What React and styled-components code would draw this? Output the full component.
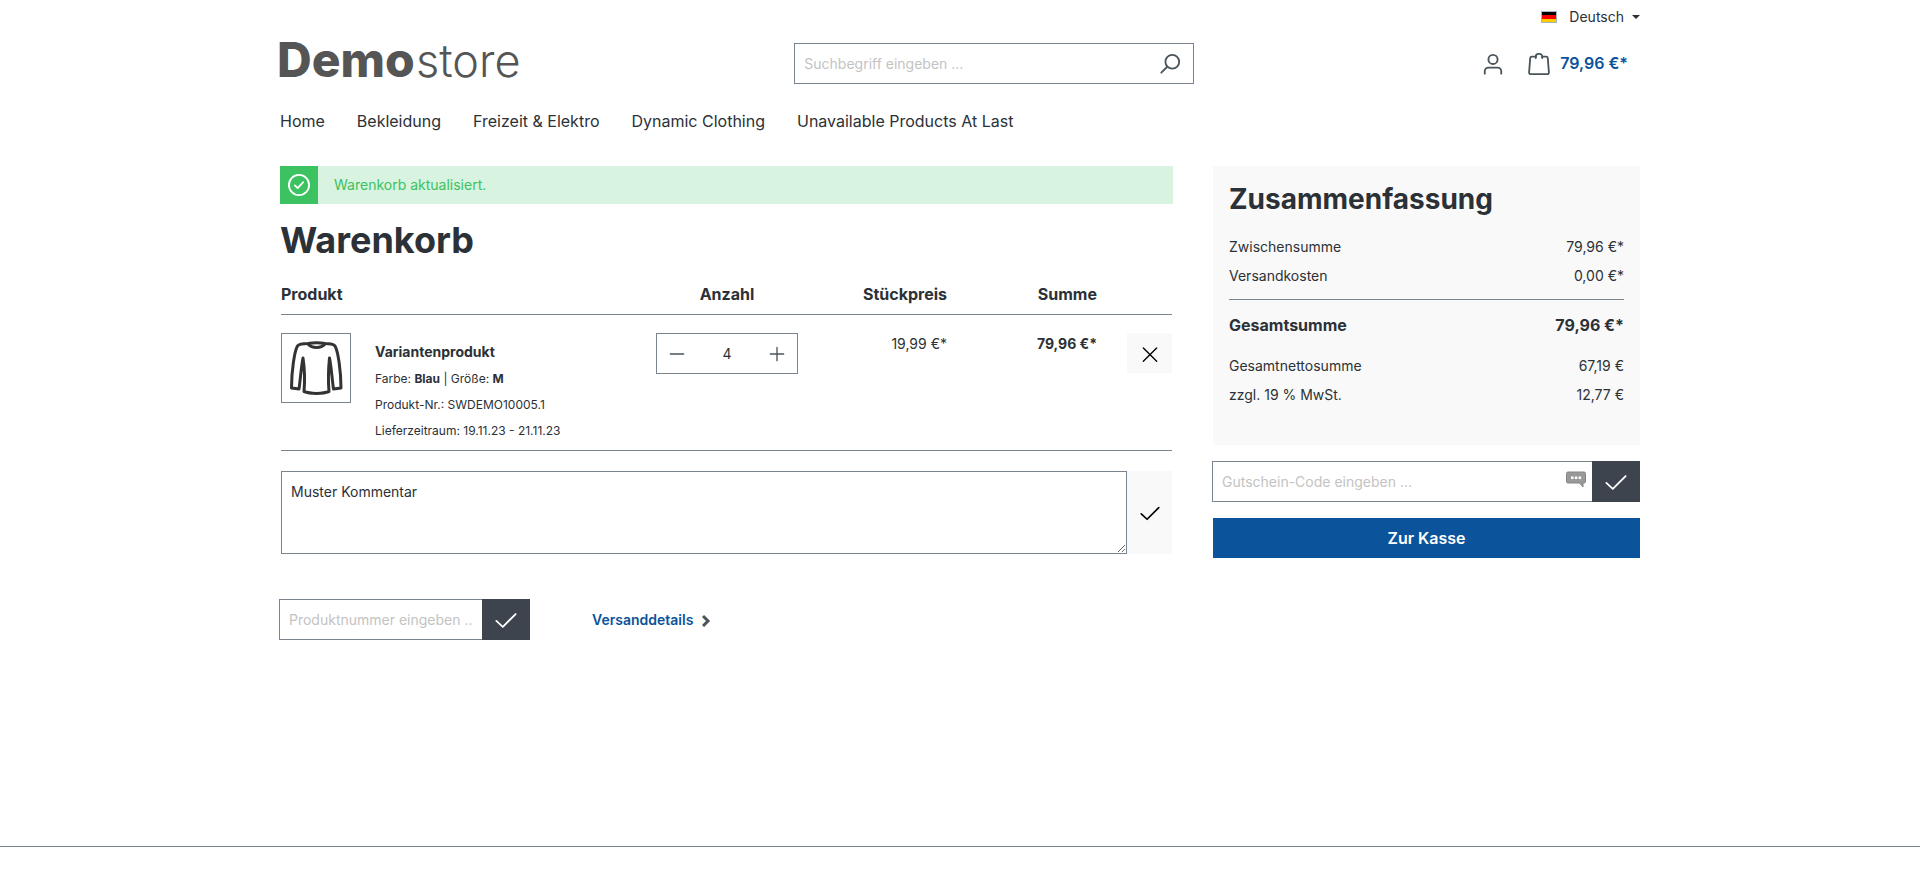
import React, { useState } from "react";
import styled, { createGlobalStyle, css, ThemeProvider } from "styled-components";

const theme = {
  color: {
    text: "#2b3136",
    border: "#798490",
    primary: "#0b539b",
    dark: "#3d444d",
    icon: "#4a545b",
    success: "#3cc261",
    successLight: "#d8f3df",
    light: "#f9f9f9",
    placeholder: "#c3c3c3",
    logo: "#555555",
  },
};

const GlobalStyle = createGlobalStyle`
  * {
    box-sizing: border-box;
  }
  body {
    margin: 0;
    background: #fff;
    color: #2b3136;
    font-family: Inter, sans-serif;
    font-size: 14px;
    line-height: 21px;
  }
  button, input, textarea, select {
    font: inherit;
    color: inherit;
  }
  a {
    color: inherit;
    text-decoration: none;
  }
`;

const Container = styled.div`
  max-width: 1400px;
  margin: 0 auto;
  padding: 0 20px;
`;

const TopBar = styled.div`
  display: flex;
  justify-content: flex-end;
  padding-top: 6px;
`;

const LanguageButton = styled.button`
  display: flex;
  align-items: center;
  padding: 0;
  border: 0;
  background: none;
`;

const Flag = styled.svg`
  width: 16px;
  height: 12px;
  margin-right: 12px;
`;

const Caret = styled.span`
  margin-left: 8px;
  border-top: 4px solid ${(props) => props.theme.color.text};
  border-left: 4px solid transparent;
  border-right: 4px solid transparent;
`;

const HeaderRow = styled.div`
  display: grid;
  grid-template-columns: 15fr 400px 13fr;
  align-items: center;
  padding: 16px 0;
`;

const LogoLink = styled.a`
  height: 41px;
  color: ${(props) => props.theme.color.logo};
  & > svg {
    display: block;
    overflow: visible;
  }
`;

const FieldCSS = css`
  min-width: 0;
  border: 1px solid ${(props) => props.theme.color.border};
  border-radius: 0;
  background: #fff;
  outline: 0;
  padding: 9px;
  &::placeholder {
    color: ${(props) => props.theme.color.placeholder};
    opacity: 1;
  }
`;

const SearchForm = styled.form`
  display: flex;
  border: 1px solid ${(props) => props.theme.color.border};
`;

const SearchInput = styled.input`
  ${FieldCSS};
  flex: 1;
  border: 0;
`;

const PlainButton = styled.button`
  display: flex;
  align-items: center;
  justify-content: center;
  padding: 0 12px;
  border: 0;
  background: none;
  color: ${(props) => props.theme.color.icon};
`;

const HeaderActions = styled.div`
  display: flex;
  justify-content: flex-end;
  align-items: center;
`;

const CartLink = styled.a`
  display: flex;
  align-items: center;
  gap: 10px;
  padding: 0 12px;
  color: ${(props) => props.theme.color.icon};
`;

const CartTotal = styled.span`
  color: ${(props) => props.theme.color.primary};
  font-size: 16px;
  font-weight: 600;
`;

const Nav = styled.nav`
  display: flex;
  gap: 32px;
  padding: 9px 0 33px;
  font-size: 16px;
  line-height: 24px;
`;

const Columns = styled.main`
  display: flex;
  gap: 40px;
  padding-bottom: 206px;
`;

const CartColumn = styled.div`
  flex: 893;
  min-width: 0;
`;

const SummaryColumn = styled.aside`
  flex: 427;
  min-width: 0;
`;

const Alert = styled.div`
  display: flex;
  height: 38px;
  background: ${(props) => props.theme.color.successLight};
  color: ${(props) => props.theme.color.success};
`;

const AlertIcon = styled.div`
  display: flex;
  align-items: center;
  justify-content: center;
  width: 38px;
  background: ${(props) => props.theme.color.success};
  color: #fff;
`;

const AlertText = styled.div`
  padding: 8px 16px;
`;

const PageTitle = styled.h1`
  margin: 14px 0 19px;
  font-size: 36px;
  line-height: 44px;
  font-weight: 700;
`;

const CartBody = styled.div`
  padding: 0 1px;
`;

const CartTable = styled.table`
  width: 100%;
  border-collapse: collapse;
  table-layout: fixed;
  & tr {
    border-bottom: 1px solid ${(props) => props.theme.color.border};
  }
`;

const HeadCell = styled.th`
  width: ${(props) => props.$width};
  padding: 1px 0 8px;
  text-align: ${(props) => props.$align || "left"};
  font-size: 16px;
  line-height: 24px;
  font-weight: 700;
`;

const Cell = styled.td`
  padding: 18px 0 10px;
  vertical-align: top;
  text-align: ${(props) => props.$align || "left"};
  font-weight: ${(props) => (props.$bold ? 700 : 400)};
`;

const Product = styled.div`
  display: flex;
  gap: 24px;
`;

const ProductImage = styled.a`
  width: 70px;
  height: 70px;
  border: 1px solid ${(props) => props.theme.color.border};
`;

const ProductInfo = styled.div`
  display: flex;
  flex-direction: column;
  gap: 8px;
  padding-top: 8px;
  font-size: 12px;
  line-height: 18px;
`;

const ProductName = styled.a`
  font-size: 14px;
  line-height: 21px;
  font-weight: 700;
`;

const Quantity = styled.div`
  display: flex;
  width: 142px;
  margin: 0 auto;
  border: 1px solid ${(props) => props.theme.color.border};
`;

const QuantityInput = styled.input`
  flex: 1;
  min-width: 0;
  padding: 9px 0;
  border: 0;
  outline: 0;
  text-align: center;
`;

const RemoveWrap = styled.div`
  display: flex;
  justify-content: flex-end;
`;

const LightButton = styled.button`
  display: flex;
  align-items: center;
  justify-content: center;
  width: 45px;
  min-height: 40px;
  padding: 1px 0 0;
  border: 0;
  background: ${(props) => props.theme.color.light};
  color: #000;
`;

const CommentForm = styled.form`
  display: flex;
  padding-top: 20px;
`;

const CommentField = styled.textarea`
  ${FieldCSS};
  flex: 1;
  height: 83px;
`;

const CartActions = styled.div`
  display: flex;
  align-items: center;
  gap: 62px;
  margin-top: 45px;
`;

const CodeForm = styled.form`
  display: flex;
  width: ${(props) => props.$width};
  margin-left: -1px;
`;

const FieldWrap = styled.div`
  position: relative;
  display: flex;
  flex: 1;
  min-width: 0;
`;

const CodeInput = styled.input`
  ${FieldCSS};
  width: 100%;
  border-right: 0;
`;

const FieldBadge = styled.svg`
  position: absolute;
  top: 10px;
  right: 6px;
`;

const DarkButton = styled.button`
  display: flex;
  align-items: center;
  justify-content: center;
  width: 48px;
  padding: 0;
  border: 0;
  background: ${(props) => props.theme.color.dark};
  color: #fff;
`;

const ShippingLink = styled.a`
  display: flex;
  align-items: center;
  gap: 9px;
  color: ${(props) => props.theme.color.primary};
  font-weight: 600;
  & > svg {
    color: ${(props) => props.theme.color.icon};
  }
`;

const Summary = styled.section`
  margin-bottom: 16px;
  padding: 16px 16px 36px;
  background: ${(props) => props.theme.color.light};
`;

const SummaryTitle = styled.h2`
  margin: 0 0 16px;
  font-size: 28px;
  line-height: 34px;
  font-weight: 700;
`;

const SummaryList = styled.dl`
  margin: 0;
`;

const SummaryRow = styled.div`
  display: flex;
  justify-content: space-between;
  padding: 4px 0;
  & > dd {
    margin: 0;
  }
  ${(props) =>
    props.$total &&
    css`
      margin: 9px 0 10px;
      padding: 13px 0 4px;
      border-top: 1px solid ${props.theme.color.border};
      font-size: 16px;
      line-height: 24px;
      font-weight: 700;
    `}
`;

const CheckoutLink = styled.a`
  display: block;
  margin-top: 16px;
  padding: 8px;
  background: ${(props) => props.theme.color.primary};
  color: #fff;
  font-size: 16px;
  line-height: 24px;
  font-weight: 600;
  text-align: center;
`;

const Footer = styled.footer`
  height: 49px;
  border-top: 1px solid ${(props) => props.theme.color.border};
`;

const Icon = ({ size = 22, width = 2, children }) => (
  <svg
    width={size}
    height={size}
    viewBox="0 0 24 24"
    fill="none"
    stroke="currentColor"
    strokeWidth={width}
    strokeLinecap="round"
    strokeLinejoin="round"
    aria-hidden="true"
  >
    {children}
  </svg>
);

const CheckIcon = (props) => (
  <Icon {...props}>
    <path d="M1.5 13 8.5 19.5 22.5 5.5" />
  </Icon>
);

const Logo = () => (
  <svg width="244" height="41" viewBox="0 0 244 41" fill="currentColor" fontSize="48">
    <text x="-3" y="34" fontWeight="800">
      Demo
    </text>
    <text x="136" y="34" fontSize="45" fontWeight="300">
      store
    </text>
  </svg>
);

const Shirt = () => (
  <svg
    width="68"
    height="68"
    viewBox="0 0 68 68"
    fill="none"
    stroke="#333"
    strokeWidth="3"
    strokeLinejoin="round"
    aria-hidden="true"
  >
    <path d="M26 9.500C21 9.500 17 10 15.500 12C12.500 17 9.500 37 9.500 54L17 55C18.500 45 19 34 21 24C22.500 34 23 46 22 57.500C28 60 41 60 47 57.500C46 46 46.500 34 47.500 24C49.500 34 50 45 51.500 55L59 54C59 37 56 17 53 12C51.500 10 47.500 9.500 43 9.500C38 8.500 31 8.500 26 9.500Z" />
    <path d="M26 10C30 14.500 39 14.500 43 10" />
  </svg>
);

const navItems = [
  "Home",
  "Bekleidung",
  "Freizeit & Elektro",
  "Dynamic Clothing",
  "Unavailable Products At Last",
];

const summaryRows = [
  { label: "Zwischensumme", value: "79,96\u00a0€*" },
  { label: "Versandkosten", value: "0,00\u00a0€*" },
  { label: "Gesamtsumme", value: "79,96\u00a0€*", total: true },
  { label: "Gesamtnettosumme", value: "67,19\u00a0€" },
  { label: "zzgl. 19 % MwSt.", value: "12,77\u00a0€" },
];

const Header = () => (
  <header>
    <TopBar>
      <LanguageButton type="button">
        <Flag viewBox="0 0 16 12" aria-hidden="true">
          <rect width="16" height="12" fill="#a9b4c0" />
          <rect x="1" y="1" width="14" height="3" fill="#000" />
          <rect x="1" y="4" width="14" height="4" fill="#f00" />
          <rect x="1" y="8" width="14" height="3" fill="#fc0" />
        </Flag>
        Deutsch
        <Caret />
      </LanguageButton>
    </TopBar>
    <HeaderRow>
      <LogoLink href="#">
        <Logo />
      </LogoLink>
      <SearchForm>
        <SearchInput type="text" placeholder="Suchbegriff eingeben ..." aria-label="Suche" />
        <PlainButton type="button" aria-label="Suchen">
          <Icon>
            <circle cx="14.500" cy="9.500" r="7.500" />
            <path d="M9 15 2.500 21.500" />
          </Icon>
        </PlainButton>
      </SearchForm>
      <HeaderActions>
        <PlainButton type="button" aria-label="Mein Konto">
          <Icon>
            <circle cx="12" cy="7" r="5" />
            <path d="M3 22.500V20a4 4 0 0 1 4-4h10a4 4 0 0 1 4 4v2.500" />
          </Icon>
        </PlainButton>
        <CartLink href="#">
          <Icon>
            <path d="M8.500 4H4.200A1.800 1.800 0 0 0 2.400 5.700L1.200 21A1.800 1.800 0 0 0 3 23H21A1.800 1.800 0 0 0 22.800 21L21.600 5.700A1.800 1.800 0 0 0 19.800 4H15.500" />
            <path d="M8.500 5.500V4A3 3 0 0 1 11.500 1h1A3 3 0 0 1 15.500 4V5.500" />
          </Icon>
          <CartTotal>79,96&nbsp;€*</CartTotal>
        </CartLink>
      </HeaderActions>
    </HeaderRow>
    <Nav>
      {navItems.map((item) => (
        <a href="#" key={item}>
          {item}
        </a>
      ))}
    </Nav>
  </header>
);

const CartItem = () => {
  const [quantity, setQuantity] = useState(4);
  return (
    <tr>
      <Cell>
        <Product>
          <ProductImage href="#" aria-label="Variantenprodukt">
            <Shirt />
          </ProductImage>
          <ProductInfo>
            <ProductName href="#">Variantenprodukt</ProductName>
            <div>
              Farbe: <b>Blau</b> | Größe: <b>M</b>
            </div>
            <div>Produkt-Nr.: SWDEMO10005.1</div>
            <div>Lieferzeitraum: 19.11.23 - 21.11.23</div>
          </ProductInfo>
        </Product>
      </Cell>
      <Cell>
        <Quantity>
          <PlainButton
            type="button"
            aria-label="Weniger"
            onClick={() => setQuantity(Math.max(1, quantity - 1))}
          >
            <Icon size={16}>
              <path d="M2 12h20" />
            </Icon>
          </PlainButton>
          <QuantityInput
            aria-label="Anzahl"
            value={quantity}
            onChange={(e) => setQuantity(Number(e.target.value) || 1)}
          />
          <PlainButton type="button" aria-label="Mehr" onClick={() => setQuantity(quantity + 1)}>
            <Icon size={16}>
              <path d="M2 12h20M12 2v20" />
            </Icon>
          </PlainButton>
        </Quantity>
      </Cell>
      <Cell $align="right">19,99&nbsp;€*</Cell>
      <Cell $align="right" $bold>
        79,96&nbsp;€*
      </Cell>
      <Cell>
        <RemoveWrap>
          <LightButton type="button" aria-label="Entfernen">
            <Icon size={16}>
              <path d="M2 3 22 23M22 3 2 23" />
            </Icon>
          </LightButton>
        </RemoveWrap>
      </Cell>
    </tr>
  );
};

const Cart = () => (
  <CartColumn>
    <Alert role="alert">
      <AlertIcon>
        <Icon>
          <circle cx="12" cy="12" r="11" />
          <path d="M7.500 12.500 10.500 15.500 16.500 9" />
        </Icon>
      </AlertIcon>
      <AlertText>Warenkorb aktualisiert.</AlertText>
    </Alert>
    <PageTitle>Warenkorb</PageTitle>
    <CartBody>
      <CartTable>
        <thead>
          <tr>
            <HeadCell>Produkt</HeadCell>
            <HeadCell $width="150px" $align="center">
              Anzahl
            </HeadCell>
            <HeadCell $width="145px" $align="right">
              Stückpreis
            </HeadCell>
            <HeadCell $width="150px" $align="right">
              Summe
            </HeadCell>
            <HeadCell $width="75px" aria-label="Aktionen" />
          </tr>
        </thead>
        <tbody>
          <CartItem />
        </tbody>
      </CartTable>
      <CommentForm>
        <CommentField defaultValue="Muster Kommentar" aria-label="Kommentar" />
        <LightButton type="button" aria-label="Kommentar speichern">
          <CheckIcon size={20} />
        </LightButton>
      </CommentForm>
    </CartBody>
    <CartActions>
      <CodeForm $width="251px">
        <FieldWrap>
          <CodeInput type="text" placeholder="Produktnummer eingeben ..." aria-label="Produktnummer" />
        </FieldWrap>
        <DarkButton type="button" aria-label="Produkt hinzufügen">
          <CheckIcon />
        </DarkButton>
      </CodeForm>
      <ShippingLink href="#">
        Versanddetails
        <svg
          width="10"
          height="14"
          viewBox="0 0 10 14"
          fill="none"
          stroke="currentColor"
          strokeWidth="3"
          aria-hidden="true"
        >
          <path d="M1 3 6 8 1 13" />
        </svg>
      </ShippingLink>
    </CartActions>
  </CartColumn>
);

const SummaryPanel = () => (
  <SummaryColumn>
    <Summary>
      <SummaryTitle>Zusammenfassung</SummaryTitle>
      <SummaryList>
        {summaryRows.map(({ label, value, total }) => (
          <SummaryRow key={label} $total={total}>
            <dt>{label}</dt>
            <dd>{value}</dd>
          </SummaryRow>
        ))}
      </SummaryList>
    </Summary>
    <CodeForm>
      <FieldWrap>
        <CodeInput type="text" placeholder="Gutschein-Code eingeben ..." aria-label="Gutschein-Code" />
        <FieldBadge width="20" height="17" viewBox="0 0 20 17" aria-hidden="true">
          <path
            d="M2 1h16a1.500 1.500 0 0 1 1.500 1.500v8A1.500 1.500 0 0 1 18 12H17v4L13.500 12H2A1.500 1.500 0 0 1 .5 10.500v-8A1.500 1.500 0 0 1 2 1Z"
            fill="#999"
            stroke="#858585"
          />
          <path d="M5 5.500h2.500V8H5zM8.800 5.500h2.500V8H8.800zM12.600 5.500h2.500V8h-2.500z" fill="#fff" />
        </FieldBadge>
      </FieldWrap>
      <DarkButton type="button" aria-label="Gutschein einlösen">
        <CheckIcon />
      </DarkButton>
    </CodeForm>
    <CheckoutLink href="#">Zur Kasse</CheckoutLink>
  </SummaryColumn>
);

const App = () => (
  <ThemeProvider theme={theme}>
    <GlobalStyle />
    <Container>
      <Header />
      <Columns>
        <Cart />
        <SummaryPanel />
      </Columns>
    </Container>
    <Footer />
  </ThemeProvider>
);

export default App;
